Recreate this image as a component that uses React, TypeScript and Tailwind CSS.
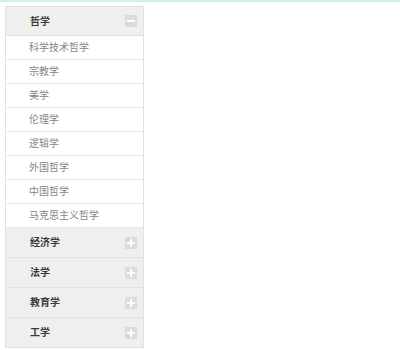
import { useState } from "react"

const groups = [
  {
    title: "哲学",
    items: ["科学技术哲学", "宗教学", "美学", "伦理学", "逻辑学", "外国哲学", "中国哲学", "马克思主义哲学"],
  },
  { title: "经济学", items: [] },
  { title: "法学", items: [] },
  { title: "教育学", items: [] },
  { title: "工学", items: [] },
]

function Toggle({ open }: { open: boolean }) {
  return (
    <span className="relative block w-[12px] h-[12px] bg-[#dcdcdc]">
      <span className="absolute left-[2px] top-[5px] w-[8px] h-[2px] bg-white" />
      {!open && <span className="absolute left-[5px] top-[2px] w-[2px] h-[8px] bg-white" />}
    </span>
  )
}

export default function App() {
  const [openIndex, setOpenIndex] = useState(0)

  return (
    <main
      className="w-[400px] h-[350px] bg-white overflow-hidden"
      style={{ fontFamily: '"Liberation Sans", "Noto Sans CJK SC", sans-serif' }}
    >
      <div className="h-[2px] bg-[#d6edef]" />
      <div className="pt-[4px] pl-[5px]">
        <div className="w-[139px] border border-[#e1e1e1] border-b-0">
          {groups.map((g, i) => {
            const open = openIndex === i
            return (
              <div key={g.title}>
                <button
                  onClick={() => setOpenIndex(open ? -1 : i)}
                  className={`flex w-full items-center justify-between bg-[#efefef] pl-[24px] pr-[6px] border-b border-[#e1e1e1] ${
                    i === 0 ? "h-[29px]" : "h-[30px]"
                  }`}
                >
                  <span className="text-[10px] font-bold text-[#3a3a3a]">{g.title}</span>
                  <Toggle open={open} />
                </button>
                {open &&
                  g.items.map((it) => (
                    <div
                      key={it}
                      className="h-[24px] flex items-center pl-[23px] text-[10px] text-[#858585] border-b border-[#e8e8e8]"
                    >
                      {it}
                    </div>
                  ))}
              </div>
            )
          })}
        </div>
      </div>
    </main>
  )
}
